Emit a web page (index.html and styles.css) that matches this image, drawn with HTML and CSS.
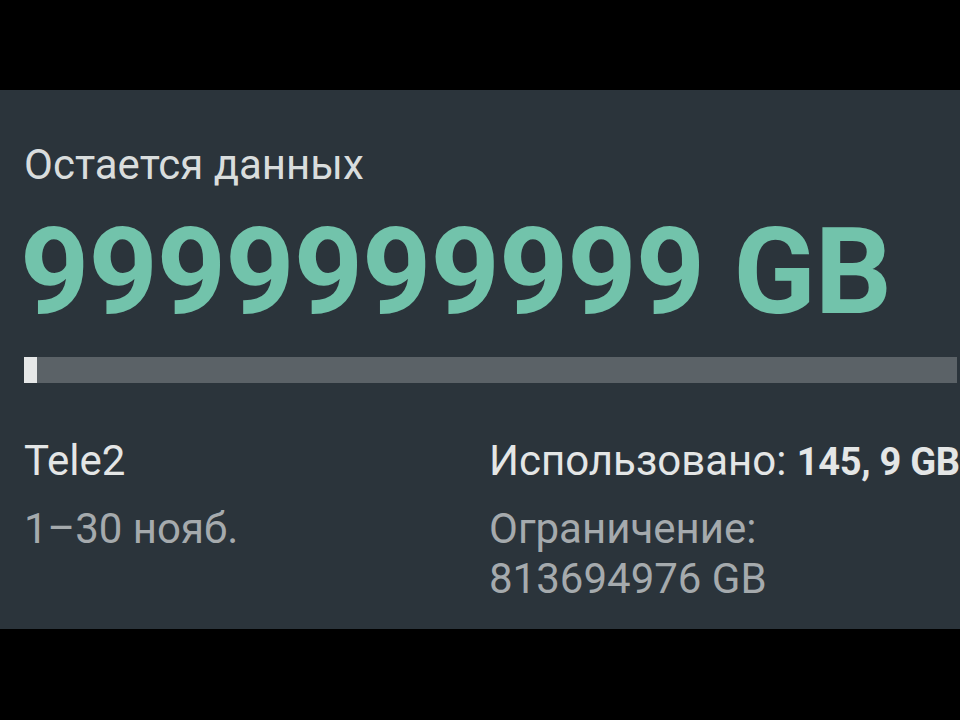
FILE: index.html
```html
<!DOCTYPE html>
<html lang="ru">
<head>
<meta charset="utf-8">
<title>Остается данных</title>
<link rel="stylesheet" href="styles.css">
</head>
<body>
<div class="screen">
  <section class="panel">
    <div class="label">Остается данных</div>
    <div class="amount">9999999999 GB</div>
    <div class="bar"><div class="bar-fill"></div></div>
    <div class="details">
      <div class="col col-left">
        <div class="line strong">Tele2</div>
        <div class="line muted gap-left">1–30 нояб.</div>
      </div>
      <div class="col col-right">
        <div class="line strong nowrap">Использовано: <b class="used">145, 9 GB</b></div>
        <div class="line tall muted gap-right">Ограничение:</div>
        <div class="line tall muted">813694976 GB</div>
      </div>
    </div>
  </section>
</div>
</body>
</html>
```
FILE: styles.css
```css
html, body {
  margin: 0;
  padding: 0;
  background: #000;
}
body {
  width: 960px;
  height: 720px;
  overflow: hidden;
  font-family: Roboto, "Noto Sans", "Liberation Sans", sans-serif;
}
.screen {
  padding-top: 90px;
}
.panel {
  height: 539px;
  box-sizing: border-box;
  background: #2b343b;
  padding: 50px 3px 0 24px;
  overflow: hidden;
}
.label {
  font-size: 42px;
  line-height: 50px;
  color: #d9dddd;
}
.amount {
  margin-top: 17px;
  margin-left: -4px;
  font-size: 121px;
  font-weight: 700;
  line-height: 130px;
  letter-spacing: -1px;
  color: #72c3ab;
  white-space: nowrap;
}
.bar {
  margin-top: 20px;
  height: 26px;
  background: #5b6267;
  display: flex;
}
.bar-fill {
  width: 13px;
  background: #e6e8e8;
}
.details {
  margin-top: 56px;
  display: grid;
  grid-template-columns: 465px 1fr;
}
.line {
  font-size: 42px;
  line-height: 44px;
}
.line.tall {
  line-height: 50px;
}
.strong {
  color: #e4e6e6;
}
.used {
  font-weight: 700;
  font-size: 38px;
  letter-spacing: -0.3px;
}
.muted {
  color: #a5aaad;
}
.gap-left {
  margin-top: 24px;
}
.gap-right {
  margin-top: 20px;
}
.nowrap {
  white-space: nowrap;
}
```
